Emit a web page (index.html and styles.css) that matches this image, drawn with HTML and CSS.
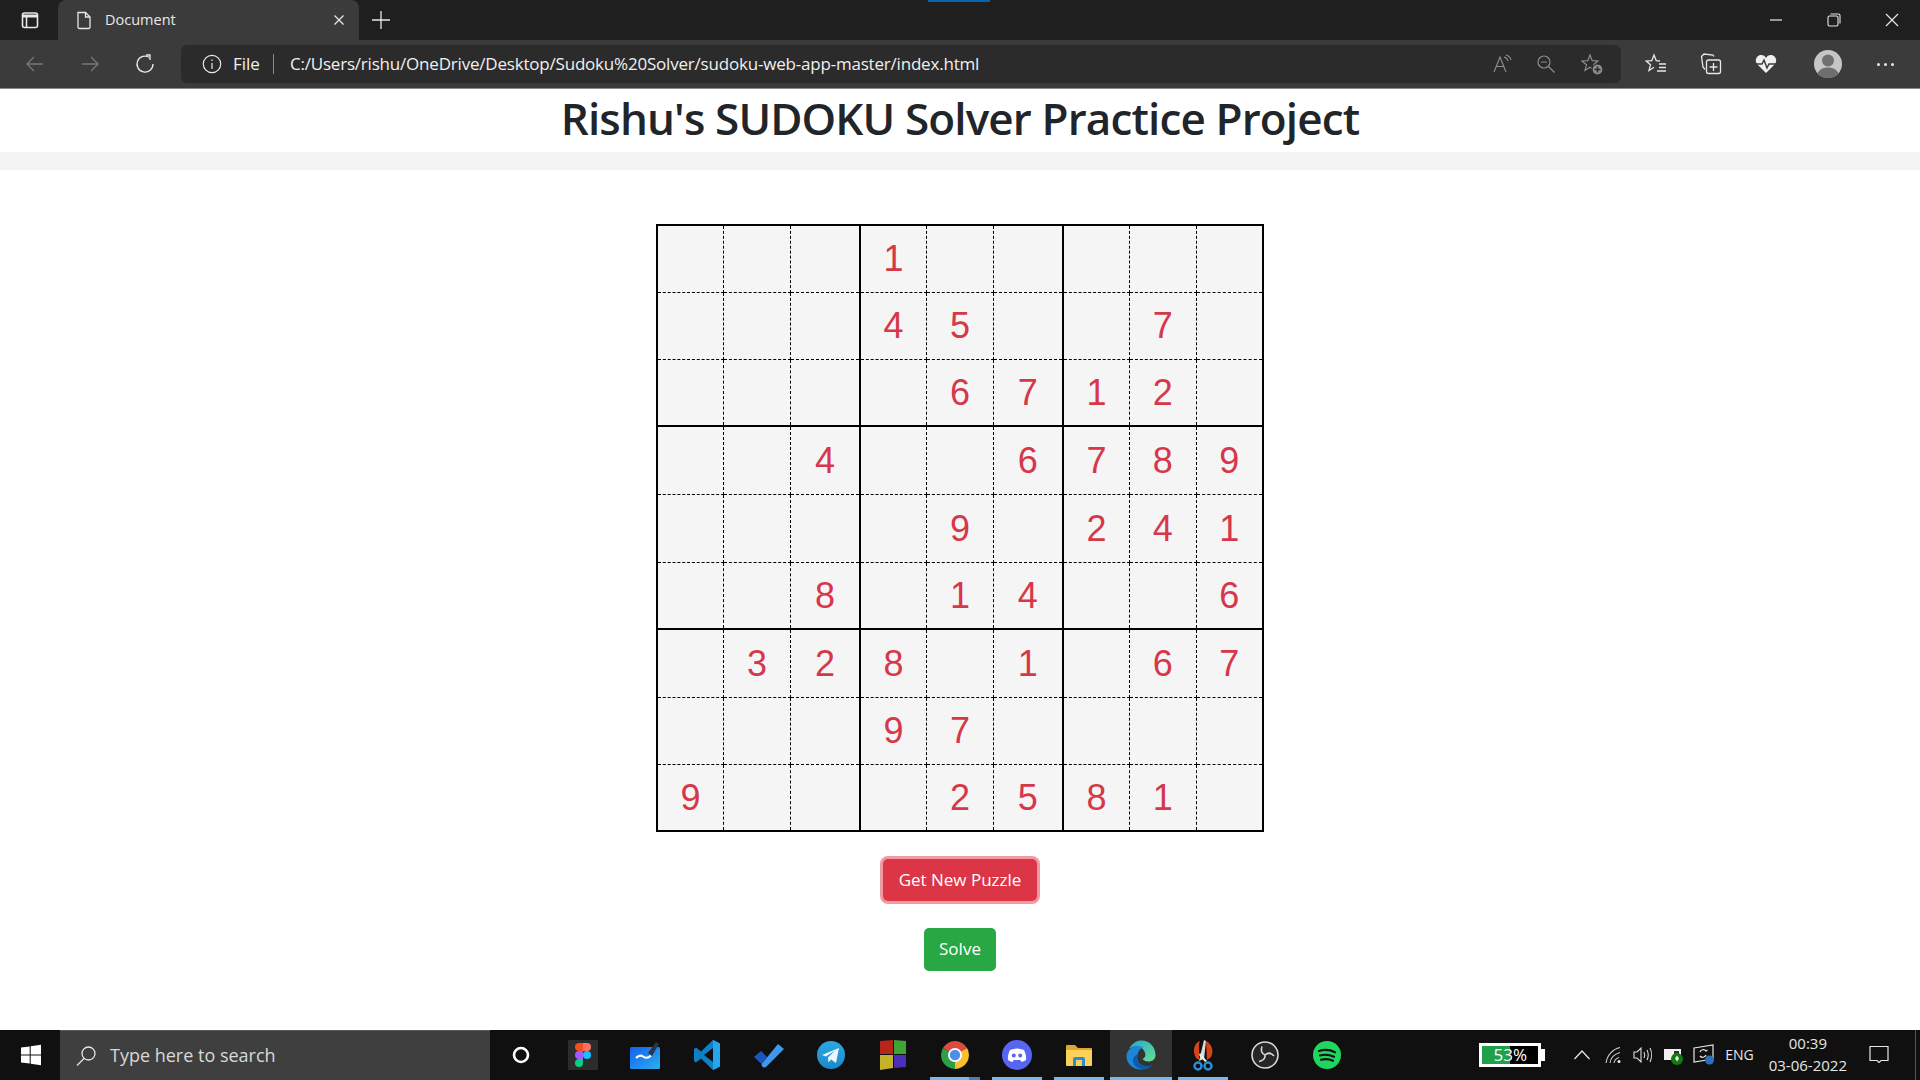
FILE: index.html
```html
<!DOCTYPE html>
<html lang="en">
<head>
  <meta charset="UTF-8">
  <title>Document</title>
  <link rel="stylesheet" href="styles.css">
</head>
<body>

  <header class="tabstrip">
    <svg class="tab-actions" width="20" height="20" viewBox="0 0 20 20" fill="none" stroke="#e8e8e8" stroke-width="1.6"><rect x="2.5" y="3" width="15" height="14.5" rx="2"/><path d="M3 6h14" stroke-width="3"/><path d="M6.5 6v11"/></svg>
    <div class="tab">
      <svg width="16" height="20" viewBox="0 0 16 20" fill="none" stroke="#e8e8e8" stroke-width="1.3"><path d="M2 2.5h7.5l4.5 4.5v10a1.5 1.5 0 0 1-1.5 1.5h-9A1.5 1.5 0 0 1 2 17z"/><path d="M9.5 2.5V7H14"/></svg>
      <span class="tab-title">Document</span>
      <svg class="tab-close" width="12" height="12" viewBox="0 0 12 12" stroke="#e8e8e8" stroke-width="1.3"><path d="M1.5 1.5l9 9M10.5 1.5l-9 9"/></svg>
    </div>
    <svg class="tab-new" width="20" height="20" viewBox="0 0 20 20" stroke="#e8e8e8" stroke-width="1.3"><path d="M10 1v18M1 10h18"/></svg>
    <div class="tab-marker"></div>
    <div class="window-btns">
      <svg width="14" height="14" viewBox="0 0 14 14" stroke="#e8e8e8" stroke-width="1.2"><path d="M1 7h12"/></svg>
      <svg width="14" height="14" viewBox="0 0 14 14" fill="none" stroke="#e8e8e8" stroke-width="1.1"><rect x="1" y="3" width="10" height="10" rx="1.5"/><path d="M3.5 1h8a1.5 1.5 0 0 1 1.5 1.5v8"/></svg>
      <svg width="14" height="14" viewBox="0 0 14 14" stroke="#e8e8e8" stroke-width="1.2"><path d="M1 1l12 12M13 1L1 13"/></svg>
    </div>
  </header>

  <div class="toolbar">
    <div class="nav-btns">
      <svg width="20" height="20" viewBox="0 0 20 20" fill="none" stroke="#787878" stroke-width="1.3"><path d="M18 10H2M9 3l-7 7 7 7"/></svg>
      <svg width="20" height="20" viewBox="0 0 20 20" fill="none" stroke="#787878" stroke-width="1.3"><path d="M2 10h16M11 3l7 7-7 7"/></svg>
      <svg width="20" height="20" viewBox="0 0 20 20" fill="none" stroke="#e8e8e8" stroke-width="1.3"><path d="M14.5 3.5a8 8 0 1 0 3.5 6.5"/><path d="M11 1h4v5"/></svg>
    </div>
    <div class="addressbar">
      <svg width="20" height="20" viewBox="0 0 20 20" fill="none" stroke="#e8e8e8" stroke-width="1.2"><circle cx="10" cy="10" r="8.7"/><path d="M10 9v6M10 5.5v1.5"/></svg>
      <span class="addr-file">File</span>
      <span class="addr-sep"></span>
      <span class="addr-url">C:/Users/rishu/OneDrive/Desktop/Sudoku%20Solver/sudoku-web-app-master/index.html</span>
      <div class="addr-icons">
        <svg width="20" height="20" viewBox="0 0 20 20" fill="none" stroke="#8e8e8e" stroke-width="1.1"><path d="M1 18L7 3l6 15M3.5 12.5h7"/><path d="M11 3c2 .5 3.5 2 4 4M13 1c2.5.7 4.5 2.7 5 5"/></svg>
        <svg width="20" height="20" viewBox="0 0 20 20" fill="none" stroke="#8e8e8e" stroke-width="1.2"><circle cx="8" cy="8" r="6"/><path d="M5 8h6M12.5 12.5l6 6"/></svg>
        <svg width="22" height="22" viewBox="0 0 22 22" fill="none" stroke="#8e8e8e" stroke-width="1.2"><path d="M9 2l2.2 5.600 5.800.4-4.500 3.800L14 17.500 9 14.300 4 17.500l1.500-5.700L1 8l5.800-.4z"/><circle cx="16.500" cy="16.500" r="5.500" fill="#8e8e8e" stroke="#2b2b2b"/><path d="M13.500 16.500h6M16.500 13.500v6" stroke="#2b2b2b" stroke-width="1.6"/></svg>
      </div>
    </div>
    <div class="tool-icons">
      <svg width="22" height="22" viewBox="0 0 22 22" fill="none" stroke="#e8e8e8" stroke-width="1.3"><path d="M15 8l-3.800-.4L9 2 6.800 7.600 1 8l4.500 3.800L4 17.500l5-3.200"/><path d="M14 11h7M14 14.500h7M12 18h9"/></svg>
      <svg width="22" height="22" viewBox="0 0 22 22" fill="none" stroke="#e8e8e8" stroke-width="1.3"><path d="M14 3.500L13 2 4 1 1.500 3.500 3 14l2 2.500"/><rect x="6.500" y="7" width="14" height="13.500" rx="2"/><path d="M13.500 10v8M9.500 14h8"/></svg>
      <svg width="22" height="20" viewBox="0 0 22 20"><path d="M11 19L2 10C-1 6 2 1 6 1c2.500 0 4 1.300 5 3 1-1.700 2.500-3 5-3 4 0 7 5 4 9z" fill="#f0f0f0"/><path d="M1 10h6l2-4 3 8 2-4h7" fill="none" stroke="#3b3b3b" stroke-width="1.5"/></svg>
      <div class="avatar">
        <svg width="28" height="28" viewBox="0 0 28 28"><circle cx="14" cy="14" r="14" fill="#c6c6c4"/><circle cx="14" cy="10.500" r="6" fill="#6f6f6f"/><path d="M3.500 23.500c2-4.500 6-6 10.500-6s8.500 1.500 10.500 6a14 14 0 0 1-21 0z" fill="#6f6f6f"/></svg>
      </div>
      <div class="more-dots"><i></i><i></i><i></i></div>
    </div>
  </div>

  <main class="page">
    <h1 class="page-title">Rishu's SUDOKU Solver Practice Project</h1>
    <div class="title-rule"></div>

    <table class="board">
      <tbody id="board"></tbody>
    </table>

    <button class="btn btn-danger" type="button">Get New Puzzle</button>
    <button class="btn btn-success" type="button">Solve</button>
  </main>

  <footer class="taskbar">
    <svg class="start" width="22" height="22" viewBox="0 0 22 22" fill="#fff"><path d="M1 3.600l8.700-1.200v8H1zM10.700 2.200L21 .8v9.600H10.700zM1 11.600h8.700v8L1 18.400zM10.700 11.600H21v9.600l-10.300-1.400z"/></svg>
    <div class="search">
      <svg width="22" height="22" viewBox="0 0 22 22" fill="none" stroke="#e6e6e6" stroke-width="1.3"><circle cx="13.500" cy="8.500" r="6.500"/><path d="M9 13.500l-7 7"/></svg>
      <span>Type here to search</span>
    </div>
    <div class="apps">
      <div class="app"><svg width="20" height="20" viewBox="0 0 20 20" fill="none" stroke="#fff" stroke-width="2.6"><circle cx="10" cy="10" r="7"/></svg></div>
      <div class="app app-figma"><svg width="16" height="24" viewBox="0 0 16 24"><path d="M4 0h4v8H4a4 4 0 0 1 0-8z" fill="#f24e1e"/><path d="M8 0h4a4 4 0 0 1 0 8H8z" fill="#ff7262"/><path d="M4 8h4v8H4a4 4 0 0 1 0-8z" fill="#a259ff"/><circle cx="12" cy="12" r="4" fill="#1abcfe"/><path d="M4 16h4v4a4 4 0 1 1-4-4z" fill="#0acf83"/></svg></div>
      <div class="app"><svg width="32" height="30" viewBox="0 0 32 30"><defs><linearGradient id="boardBlue" x1="0" y1="0" x2="1" y2="1"><stop offset="0" stop-color="#1560ee"/><stop offset="1" stop-color="#2ab0ee"/></linearGradient></defs><rect x="1" y="7" width="30" height="22" rx="1.5" fill="url(#boardBlue)"/><path d="M7 18c3-3 5-3 7-1.500s5 2 8-1" fill="none" stroke="#fff" stroke-width="2"/><path d="M19 13l8-11 3 2-7 12z" fill="#2a3444"/></svg></div>
      <div class="app"><svg width="26" height="30" viewBox="0 0 26 30"><path fill-rule="evenodd" d="M19 0l7 3.500v23L19 30 7 18.500l-5 4-2-1.500V9l2-1.500 5 4zM19 8l-9 7 9 7z" fill="#0f80c8"/><path fill-rule="evenodd" d="M19 0l7 3.500v23L19 30z" fill="#24a6ee"/></svg></div>
      <div class="app"><svg width="30" height="26" viewBox="0 0 30 26"><path d="M0 15l7-6 6 6-5.500 7z" fill="#1d55c0"/><path d="M7.500 22L24 2l6 5-18 18a3 3 0 0 1-4.500-3z" fill="#3f97ee"/></svg></div>
      <div class="app"><svg width="28" height="28" viewBox="0 0 28 28"><defs><linearGradient id="tgBlue" x1="0" y1="0" x2="0" y2="1"><stop offset="0" stop-color="#2aa8e2"/><stop offset="1" stop-color="#1e88c8"/></linearGradient></defs><circle cx="14" cy="14" r="14" fill="url(#tgBlue)"/><path d="M5 14l17-7-3 15-5-3.500-2.500 3-.5-5 7-7-9 6z" fill="#eef6fb"/></svg></div>
      <div class="app"><svg width="30" height="32" viewBox="0 0 30 32"><path d="M2 2l13-1v14H2z" fill="#b8261a"/><path d="M16 1l12 1v13H16z" fill="#3da535"/><path d="M2 16h13v13L2 31z" fill="#c2b32a"/><path d="M16 16h12v12l-12 1z" fill="#4b2fb8"/></svg></div>
      <div class="app app-underline app-stacked"><svg width="28" height="28" viewBox="0 0 28 28"><path d="M14 14L1.900 7A14 14 0 0 1 26.100 7z" fill="#dd4b3e"/><path d="M14 14L26.100 7A14 14 0 0 1 14 28z" fill="#f7bf2f"/><path d="M14 14V28A14 14 0 0 1 1.900 7z" fill="#2c9f48"/><circle cx="14" cy="14" r="7" fill="#fff"/><circle cx="14" cy="14" r="5.200" fill="#4d8fe6"/></svg></div>
      <div class="app app-underline"><svg width="30" height="30" viewBox="0 0 30 30"><circle cx="15" cy="15" r="15" fill="#5865f2"/><path d="M8 10c4.500-2 9.500-2 14 0 1.500 3 2.500 6.500 2 10-1.500 1-3 1.700-4.500 2l-1.200-2h-6.600l-1.200 2c-1.500-.3-3-1-4.500-2-.5-3.500.5-7 2-10z" fill="#fff"/><circle cx="11.800" cy="15.500" r="2" fill="#5865f2"/><circle cx="18.200" cy="15.500" r="2" fill="#5865f2"/></svg></div>
      <div class="app app-underline"><svg width="28" height="26" viewBox="0 0 28 26"><path d="M1 4a1 1 0 0 1 1-1h8l3 3h13a1 1 0 0 1 1 1v4H1z" fill="#e0a62c"/><path d="M1 8h26v15a1 1 0 0 1-1 1H2a1 1 0 0 1-1-1z" fill="#fbd15b"/><path d="M8 24v-7a2 2 0 0 1 2-2h8a2 2 0 0 1 2 2v7h-3v-6h-6v6z" fill="#2f8bce"/></svg></div>
      <div class="app app-active"><svg width="30" height="30" viewBox="0 0 30 30"><defs><linearGradient id="edgeGreen" x1="0" y1="0" x2="1" y2="1"><stop offset="0" stop-color="#1fa8d8"/><stop offset="1" stop-color="#6be08a"/></linearGradient></defs><path d="M3 9C6 3 11 .5 15.500 .5 24 .5 29.500 7.500 29.500 15c0 4.500-3.500 6.500-7 6.500-3 0-5-1-6-2.500 2.500-1 3.500-3.500 2.500-6.500C17.500 8 13 6 9.500 6.500 7 6.800 4.500 7.800 3 9z" fill="url(#edgeGreen)"/><path d="M15 6.500C7 5 .5 10 .5 16c0 8 6.500 13.500 14.500 13.500 4 0 8-1.500 10.500-4-3.500 1.500-8.500 1-11.500-1.500-3-2.500-3.500-7-2-11 1-3 3-5 5.500-6z" fill="#1b86d8"/><path d="M7 19c-1 6 5 10.500 11 10 4-.5 6.500-2 8-4-5 2-11 1-14-3-1.500-2-1.500-5 0-8-2.500 1-4.500 3-5 5z" fill="#0f5aa8"/></svg></div>
      <div class="app app-underline"><svg width="22" height="32" viewBox="0 0 22 32"><path d="M8 2C2 4 0 12 4 19l3 2V5z" fill="#d5451b"/><path d="M14 2c6 3 8 10 5 16l-4 3z" fill="#d5451b"/><path d="M12 1l2 1-2 18-5 2z" fill="#dcdcdc"/><path d="M8 14l7 8-2 1-6-7z" fill="#eee"/><circle cx="6" cy="27" r="3.500" fill="none" stroke="#2a8fd8" stroke-width="2.4"/><circle cx="16" cy="27" r="3.500" fill="none" stroke="#2a8fd8" stroke-width="2.4"/></svg></div>
      <div class="app"><svg width="28" height="28" viewBox="0 0 28 28" fill="none" stroke="#d8d8d8"><circle cx="14" cy="14" r="13" fill="#262626" stroke-width="1.6"/><path d="M14 14c-3-1-4.500-4-3-8.500M14 14c3-2.500 6.500-2 9 1M14 14c.5 3-2 5.500-6 6.500" stroke-width="1.6"/></svg></div>
      <div class="app"><svg width="28" height="28" viewBox="0 0 28 28"><circle cx="14" cy="14" r="14" fill="#1ed760"/><path d="M6 10c6-1.800 11-1.300 16 1.300M7 14.500c5-1.400 9-1 14 1.200M8 18.700c4-1 8-.8 12 1" fill="none" stroke="#101010" stroke-width="2.2" stroke-linecap="round"/></svg></div>
    </div>

    <div class="tray">
      <div class="battery">
        <div class="battery-fill"></div>
        <span class="battery-text">53%</span>
      </div>
      <div class="battery-tip"></div>
      <svg class="tray-chevron" width="18" height="12" viewBox="0 0 18 12" fill="none" stroke="#e6e6e6" stroke-width="1.3"><path d="M1.500 10L9 2l7.500 8"/></svg>
      <svg width="18" height="18" viewBox="0 0 18 18" fill="none" stroke="#c8c8c8" stroke-width="1.1"><path d="M1 17C2 9 8 3 15 1.500M5 17c.7-5 4.500-9 10-10.500M9 17c.4-2.500 2-4.500 5-5.500"/><circle cx="14" cy="15.500" r="1.500" fill="#eee" stroke="none"/></svg>
      <svg width="20" height="18" viewBox="0 0 20 18" fill="none" stroke="#dcdcdc" stroke-width="1.1"><path d="M1 6h3l4-4v14l-4-4H1zM11 6c1 2 1 4 0 6M14 4c1.500 3 1.500 7 0 10M17 2c2 4 2 10 0 14"/></svg>
      <svg width="20" height="20" viewBox="0 0 20 20"><rect x="1" y="4" width="17" height="11" fill="#f0f0f0"/><rect x="11" y="6" width="5" height="7" fill="#333"/><circle cx="14" cy="14" r="6" fill="#107c10"/><path d="M14 10.500l2 3-2 3-2-3z" fill="#e8f3e8"/></svg>
      <svg width="22" height="22" viewBox="0 0 22 22" fill="none" stroke="#e6e6e6" stroke-width="1.2"><path d="M1 4l19-3v14L1 18z"/><path d="M7 8a3.500 3.500 0 0 1 6-1l1.500-1M13 11a3.500 3.500 0 0 1-6 1"/><circle cx="16.500" cy="16" r="4.500" fill="#2d6fbb" stroke="none"/></svg>
      <span class="tray-lang">ENG</span>
      <div class="clock"><span>00:39</span><span>03-06-2022</span></div>
      <svg class="notify" width="20" height="20" viewBox="0 0 20 20" fill="none" stroke="#e6e6e6" stroke-width="1.2"><path d="M1 1.500h18v14h-7l-2 2-2-2H1z"/></svg>
      <div class="show-desktop"></div>
    </div>
  </footer>

  <script>
    // 0 means an empty cell
    const puzzle = [
      [0,0,0,1,0,0,0,0,0],
      [0,0,0,4,5,0,0,7,0],
      [0,0,0,0,6,7,1,2,0],
      [0,0,4,0,0,6,7,8,9],
      [0,0,0,0,9,0,2,4,1],
      [0,0,8,0,1,4,0,0,6],
      [0,3,2,8,0,1,0,6,7],
      [0,0,0,9,7,0,0,0,0],
      [9,0,0,0,2,5,8,1,0]
    ];

    const board = document.getElementById('board');
    puzzle.forEach(row => {
      const cells = row.map(n => `<td>${n || ''}</td>`).join('');
      board.insertAdjacentHTML('beforeend', `<tr>${cells}</tr>`);
    });
  </script>

</body>
</html>
```

FILE: styles.css
```css
html, body {
  margin: 0;
  height: 100%;
  overflow: hidden;
}

body {
  display: flex;
  flex-direction: column;
  height: 1080px;
  font-family: 'Open Sans', 'Noto Sans', sans-serif;
  background: #fff;
}

svg {
  display: block;
  flex: none;
}

/* browser chrome */
.tabstrip {
  position: relative;
  display: flex;
  align-items: center;
  height: 40px;
  background: #1f1f1f;
  flex: none;
}

.tab-actions {
  margin-left: 20px;
}

.tab {
  display: flex;
  align-items: center;
  box-sizing: border-box;
  width: 301px;
  height: 40px;
  margin-left: 18px;
  padding: 0 14px 0 18px;
  background: #3b3b3b;
  border-radius: 8px 8px 0 0;
}

.tab-title {
  margin-left: 13px;
  padding-bottom: 2px;
  font-size: 14.5px;
  color: #e8e8e8;
}

.tab-close {
  margin-left: auto;
}

.tab-new {
  margin-left: 12px;
}

.tab-marker {
  position: absolute;
  left: 928px;
  top: 0;
  width: 62px;
  height: 2px;
  background: #0a64ad;
}

.window-btns {
  display: flex;
  align-items: center;
  gap: 44px;
  margin-left: auto;
  margin-right: 21px;
}

.toolbar {
  display: flex;
  align-items: center;
  height: 48px;
  background: #3b3b3b;
  border-bottom: 1px solid #8a8a8a;
  flex: none;
}

.nav-btns {
  display: flex;
  gap: 35px;
  margin-left: 25px;
}

.addressbar {
  display: flex;
  align-items: center;
  box-sizing: border-box;
  width: 1440px;
  height: 38px;
  margin-left: 26px;
  padding: 0 18px 0 21px;
  background: #2b2b2b;
  border-radius: 6px;
  color: #f0f0f0;
  font-size: 17px;
}

.addr-file {
  margin-left: 11px;
  padding-bottom: 2px;
}

.addr-sep {
  width: 1px;
  height: 20px;
  margin: 0 16px 0 13px;
  background: #8a8a8a;
}

.addr-url {
  padding-bottom: 2px;
  letter-spacing: -0.2px;
}

.addr-icons {
  display: flex;
  align-items: center;
  gap: 25px;
  margin-left: auto;
}

.addr-icons svg:first-child {
  margin-right: -2px;
}

.tool-icons {
  display: flex;
  align-items: center;
  gap: 33px;
  margin-left: 24px;
}

.avatar {
  margin-left: 4px;
}

.more-dots {
  display: flex;
  gap: 4px;
  margin-left: 2px;
}

.more-dots i {
  width: 3px;
  height: 3px;
  border-radius: 50%;
  background: #e8e8e8;
}

/* page */
.page {
  flex: 1;
  display: flex;
  flex-direction: column;
  align-items: center;
  min-height: 0;
}

.page-title {
  width: 100%;
  height: 63px;
  margin: 0;
  font-size: 44px;
  font-weight: 600;
  letter-spacing: -0.86px;
  line-height: 58px;
  text-align: center;
  color: #212529;
}

.title-rule {
  width: 100%;
  height: 18px;
  background: #f3f3f3;
}

.board {
  width: 608px;
  height: 608px;
  margin-top: 54px;
  border-collapse: collapse;
  table-layout: fixed;
  border: 2px solid #000;
  background: #f5f5f5;
}

.board tr {
  height: 67px;
}

.board tr:nth-child(4),
.board tr:nth-child(5),
.board tr:nth-child(7) {
  height: 68px;
}

.board td {
  padding: 1px 0 0;
  border: 1px dashed #000;
  font-family: 'Liberation Sans', Arial, sans-serif;
  font-size: 36px;
  color: #d6374a;
  text-align: center;
}

.board td:nth-child(3),
.board td:nth-child(6) {
  width: 68px;
}

.board td:nth-child(3n) {
  border-right: 2px solid #000;
}

.board tr:nth-child(3n) td {
  border-bottom: 2px solid #000;
}

.btn {
  display: block;
  box-sizing: border-box;
  padding: 0 0 2px;
  border: 0;
  border-radius: 5px;
  font-family: inherit;
  font-size: 17px;
  white-space: nowrap;
  color: #fff;
}

.btn-danger {
  width: 154px;
  height: 42px;
  margin-top: 27px;
  background: #dc3545;
  box-shadow: 0 0 0 3px #f09aa3;
}

.btn-success {
  width: 72px;
  height: 43px;
  margin-top: 27px;
  background: #28a745;
}

/* taskbar */
.taskbar {
  display: flex;
  align-items: center;
  height: 50px;
  background: #101010;
  flex: none;
}

.start {
  margin-left: 20px;
}

.search {
  display: flex;
  align-items: center;
  box-sizing: border-box;
  width: 430px;
  height: 50px;
  margin-left: 18px;
  padding-left: 15px;
  background: #3f3f3f;
  border-top: 1px solid #5a5a5a;
  color: #d8d8d8;
  font-size: 18px;
}

.search span {
  margin-left: 13px;
  padding-bottom: 2px;
}

.apps {
  display: flex;
}

.app {
  position: relative;
  display: flex;
  align-items: center;
  justify-content: center;
  width: 62px;
  height: 50px;
}

.app-figma svg {
  background: #2c2c2c;
  padding: 3px 7px;
  width: 16px;
  height: 24px;
  box-sizing: content-box;
}

.app-underline::after,
.app-active::after {
  content: '';
  position: absolute;
  left: 6px;
  right: 6px;
  bottom: 0;
  height: 3px;
  background: #76b9ed;
}

.app-stacked::after {
  background: linear-gradient(to right, #76b9ed 79%, #4f7fa8 79%);
}

.app-active {
  background: #333;
}

.app-active::after {
  left: 0;
  right: 0;
}

.tray {
  display: flex;
  align-items: center;
  height: 50px;
  margin-left: auto;
  color: #e6e6e6;
}

.battery {
  position: relative;
  box-sizing: border-box;
  width: 62px;
  height: 24px;
  border: 3px solid #fff;
  background: #000;
}

.battery-fill {
  width: 50%;
  height: 100%;
  background: #1fa14a;
}

.battery-text {
  position: absolute;
  left: 0;
  right: 0;
  top: -2px;
  text-align: center;
  font-size: 17px;
  line-height: 22px;
  color: #fff;
}

.battery-tip {
  width: 4px;
  height: 12px;
  background: #fff;
  margin-right: 28px;
}

.tray > svg {
  margin-right: 10px;
}

.tray > .tray-chevron {
  margin-right: 14px;
}

.tray-lang {
  font-size: 14px;
  padding-bottom: 2px;
}

.clock {
  display: flex;
  flex-direction: column;
  align-items: center;
  gap: 3px;
  margin-left: 15px;
  padding-bottom: 2px;
  font-size: 15px;
  line-height: 19px;
}

.tray .notify {
  margin: 0 0 0 22px;
}

.show-desktop {
  width: 1px;
  height: 50px;
  margin-left: 26px;
  margin-right: 4px;
  background: #555;
}
```
